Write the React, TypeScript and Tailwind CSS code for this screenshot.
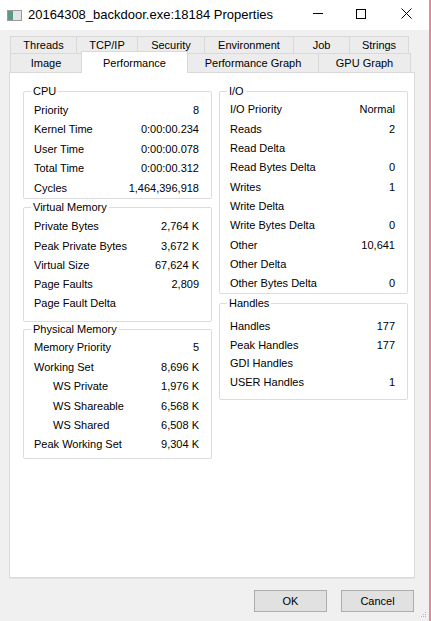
import clsx from "clsx"

type Row = { label: string; value?: string; indent?: boolean }

const cpu: Row[] = [
    { label: "Priority", value: "8" },
    { label: "Kernel Time", value: "0:00:00.234" },
    { label: "User Time", value: "0:00:00.078" },
    { label: "Total Time", value: "0:00:00.312" },
    { label: "Cycles", value: "1,464,396,918" },
]

const virtualMemory: Row[] = [
    { label: "Private Bytes", value: "2,764 K" },
    { label: "Peak Private Bytes", value: "3,672 K" },
    { label: "Virtual Size", value: "67,624 K" },
    { label: "Page Faults", value: "2,809" },
    { label: "Page Fault Delta" },
]

const physicalMemory: Row[] = [
    { label: "Memory Priority", value: "5" },
    { label: "Working Set", value: "8,696 K" },
    { label: "WS Private", value: "1,976 K", indent: true },
    { label: "WS Shareable", value: "6,568 K", indent: true },
    { label: "WS Shared", value: "6,508 K", indent: true },
    { label: "Peak Working Set", value: "9,304 K" },
]

const io: Row[] = [
    { label: "I/O Priority", value: "Normal" },
    { label: "Reads", value: "2" },
    { label: "Read Delta" },
    { label: "Read Bytes Delta", value: "0" },
    { label: "Writes", value: "1" },
    { label: "Write Delta" },
    { label: "Write Bytes Delta", value: "0" },
    { label: "Other", value: "10,641" },
    { label: "Other Delta" },
    { label: "Other Bytes Delta", value: "0" },
]

const handles: Row[] = [
    { label: "Handles", value: "177" },
    { label: "Peak Handles", value: "177" },
    { label: "GDI Handles" },
    { label: "USER Handles", value: "1" },
]

function Group({
    title,
    rows,
    className,
    rowClass,
}: {
    title: string
    rows: Row[]
    className: string
    rowClass: string
}) {
    return (
        <div className={clsx("relative border border-[#dcdcdc] rounded-[2px]", className)}>
            <span className="absolute -top-[7px] left-[7px] bg-white px-[2px] leading-[13px]">
                {title}
            </span>
            {rows.map((r) => (
                <div
                    key={r.label}
                    className={clsx(
                        "flex items-center justify-between pl-[10px] pr-[12px]",
                        rowClass
                    )}
                >
                    <span className={clsx(r.indent && "pl-[19px]")}>{r.label}</span>
                    <span>{r.value}</span>
                </div>
            ))}
        </div>
    )
}

const row1 = [
    { name: "Threads", w: "w-[67px]" },
    { name: "TCP/IP", w: "w-[62px]" },
    { name: "Security", w: "w-[68px]" },
    { name: "Environment", w: "w-[90px]" },
    { name: "Job", w: "w-[57px]" },
    { name: "Strings", w: "w-[60px]" },
]

const row2 = [
    { name: "Image", w: "w-[72px]" },
    { name: "Performance", w: "w-[107px]", active: true },
    { name: "Performance Graph", w: "w-[132px]" },
    { name: "GPU Graph", w: "w-[93px]" },
]

export default function App() {
    return (
        <div
            className="w-[431px] h-[621px] bg-[#f0f0f0] border-r-2 border-[#e8879c] flex flex-col text-[11px] text-black overflow-hidden relative"
            style={{ fontFamily: '"Liberation Sans", Arial, sans-serif' }}
        >
            {/* TITLE BAR */}
            <div className="h-[30px] bg-white flex items-center relative">
                <div className="ml-[7px] w-[15px] h-[11px] border border-[#9a9a9a] bg-[#e4e4e4] flex">
                    <div className="w-[5px] bg-[#5b9a86]" />
                </div>
                <span className="ml-[6px] text-[13px]">20164308_backdoor.exe:18184 Properties</span>
                <div className="absolute left-[313px] top-[13px] w-[10px] h-px bg-black" />
                <div className="absolute left-[356px] top-[9px] w-[10px] h-[10px] border border-black" />
                <svg className="absolute left-[401px] top-[8px]" width="11" height="11" viewBox="0 0 11 11">
                    <path d="M0.5 0.5 L10.5 10.5 M10.5 0.5 L0.5 10.5" stroke="#000" strokeWidth="1" />
                </svg>
            </div>

            {/* TABS */}
            <div className="ml-[10px] mt-[6px] w-[404px] flex flex-col">
                <div className="flex h-[17px]">
                    {row1.map((t) => (
                        <div
                            key={t.name}
                            className={clsx(
                                t.w,
                                "flex items-center justify-center pt-px border border-[#d9d9d9] -ml-px first:ml-0 border-b-0 bg-[#ececec]"
                            )}
                        >
                            {t.name}
                        </div>
                    ))}
                </div>
                <div className="flex h-[19px] items-end">
                    {row2.map((t) =>
                        t.active ? (
                            <div
                                key={t.name}
                                className={clsx(
                                    t.w,
                                    "h-[22px] -mb-px relative z-10 flex items-start pt-[3px] justify-center bg-white border border-[#d9d9d9] border-b-0 -ml-px"
                                )}
                            >
                                {t.name}
                            </div>
                        ) : (
                            <div
                                key={t.name}
                                className={clsx(
                                    t.w,
                                    "h-[19px] flex items-center justify-center pt-px border border-[#d9d9d9] border-b-0 bg-[#ececec] -ml-px first:ml-0"
                                )}
                            >
                                {t.name}
                            </div>
                        )
                    )}
                </div>
            </div>

            {/* PANEL */}
            <div className="ml-[9px] w-[406px] h-[506px] bg-white border border-[#d9d9d9] shadow-[0_1px_0_#e3e3e3] flex gap-[7px] pl-[13px] pt-[18px]">
                <div className="w-[189px] flex flex-col">
                    <Group title="CPU" rows={cpu} className="h-[108px] pt-[8px]" rowClass="h-[19.5px]" />
                    <Group
                        title="Virtual Memory"
                        rows={virtualMemory}
                        className="h-[115px] pt-[9px] mt-[8px]"
                        rowClass="h-[19.25px]"
                    />
                    <Group
                        title="Physical Memory"
                        rows={physicalMemory}
                        className="h-[130px] pt-[8px] mt-[7px]"
                        rowClass="h-[19.4px]"
                    />
                </div>
                <div className="w-[189px] flex flex-col">
                    <Group title="I/O" rows={io} className="h-[203px] pt-[8px]" rowClass="h-[19.33px]" />
                    <Group
                        title="Handles"
                        rows={handles}
                        className="h-[97px] pt-[13px] mt-[9px]"
                        rowClass="h-[18.7px]"
                    />
                </div>
            </div>

            {/* BUTTONS */}
            <div className="flex justify-end gap-[14px] pr-[15px] mt-[12px]">
                <button className="w-[73px] h-[22px] bg-[#e1e1e1] border border-[#adadad]">OK</button>
                <button className="w-[73px] h-[22px] bg-[#e1e1e1] border border-[#adadad]">Cancel</button>
            </div>

            {/* RESIZE GRIP */}
            <svg className="absolute right-[2px] bottom-[3px]" width="7" height="7" viewBox="0 0 7 7">
                <rect x="5" y="1" width="1" height="1" fill="#b5b5b5" />
                <rect x="3" y="3" width="1" height="1" fill="#b5b5b5" />
                <rect x="5" y="3" width="1" height="1" fill="#b5b5b5" />
                <rect x="1" y="5" width="1" height="1" fill="#b5b5b5" />
                <rect x="3" y="5" width="1" height="1" fill="#b5b5b5" />
                <rect x="5" y="5" width="1" height="1" fill="#b5b5b5" />
            </svg>
        </div>
    )
}
